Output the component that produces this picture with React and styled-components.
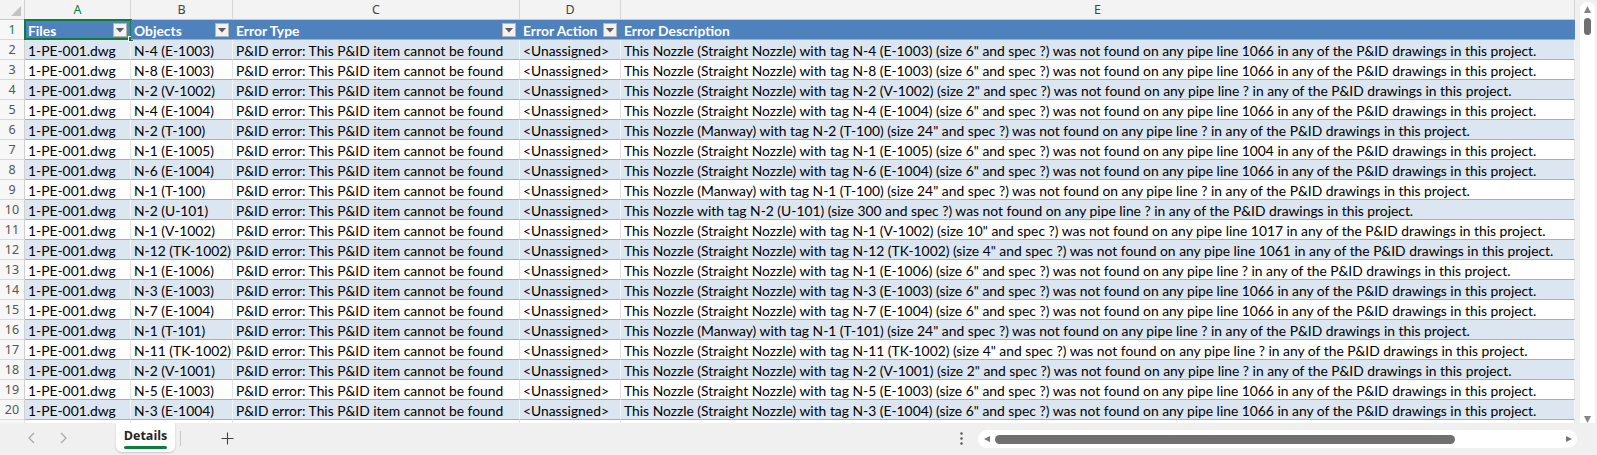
import React from "react";
import styled, { createGlobalStyle } from "styled-components";

const GlobalStyle = createGlobalStyle`
  html, body { margin: 0; padding: 0; background: #f0f0f0; }
  body { font-family: Lato, "Liberation Sans", sans-serif; }
  * { box-sizing: border-box; }
`;

const COLS = [25, 106, 102, 287, 101, 954];
const LETTERS = ["A", "B", "C", "D", "E"];
const HEADERS = ["Files", "Objects", "Error Type", "Error Action", "Error Description"];
const FILTERS = [true, true, true, true, false];

const S = (tag, size, line) =>
  `This Nozzle (Straight Nozzle) with tag ${tag} (size ${size}" and spec ?) was not found on any pipe line ${line} in any of the P&ID drawings in this project.`;
const M = (tag, size, line) =>
  `This Nozzle (Manway) with tag ${tag} (size ${size}" and spec ?) was not found on any pipe line ${line} in any of the P&ID drawings in this project.`;

const ROWS = [
  ["N-4 (E-1003)", S("N-4 (E-1003)", 6, 1066)],
  ["N-8 (E-1003)", S("N-8 (E-1003)", 6, 1066)],
  ["N-2 (V-1002)", S("N-2 (V-1002)", 2, "?")],
  ["N-4 (E-1004)", S("N-4 (E-1004)", 6, 1066)],
  ["N-2 (T-100)", M("N-2 (T-100)", 24, "?")],
  ["N-1 (E-1005)", S("N-1 (E-1005)", 6, 1004)],
  ["N-6 (E-1004)", S("N-6 (E-1004)", 6, 1066)],
  ["N-1 (T-100)", M("N-1 (T-100)", 24, "?")],
  [
    "N-2 (U-101)",
    "This Nozzle with tag N-2 (U-101) (size 300 and spec ?) was not found on any pipe line ? in any of the P&ID drawings in this project.",
  ],
  ["N-1 (V-1002)", S("N-1 (V-1002)", 10, 1017)],
  ["N-12 (TK-1002)", S("N-12 (TK-1002)", 4, 1061)],
  ["N-1 (E-1006)", S("N-1 (E-1006)", 6, "?")],
  ["N-3 (E-1003)", S("N-3 (E-1003)", 6, 1066)],
  ["N-7 (E-1004)", S("N-7 (E-1004)", 6, 1066)],
  ["N-1 (T-101)", M("N-1 (T-101)", 24, "?")],
  ["N-11 (TK-1002)", S("N-11 (TK-1002)", 4, "?")],
  ["N-2 (V-1001)", S("N-2 (V-1001)", 2, "?")],
  ["N-5 (E-1003)", S("N-5 (E-1003)", 6, 1066)],
  ["N-3 (E-1004)", S("N-3 (E-1004)", 6, 1066)],
];

const GREEN = "#107c41";

const Window = styled.div`
  width: 1597px;
  height: 455px;
  display: flex;
  flex-direction: column;
  background: #f0f0f0;
  overflow: hidden;
`;

const Main = styled.div`
  display: flex;
  height: 423px;
`;

const Sheet = styled.div`
  display: grid;
  grid-template-columns: ${COLS.map((c) => c + "px").join(" ")};
  grid-auto-rows: 20px;
  width: 1575px;
  height: 423px;
  overflow: hidden;
  background: #ffffff;
  font-size: 13.85px;
  color: #000;
`;

const Corner = styled.div`
  background: #f3f3f3;
  border-right: 1px solid #d0d0d0;
  border-bottom: 1px solid #c8c8c8;
  display: flex;
  align-items: flex-end;
  justify-content: flex-end;
  padding: 0 3px 3px 0;
`;

const ColHead = styled.div`
  background: #f3f3f3;
  border-right: 1px solid #d6d6d6;
  border-bottom: 1px solid #c8c8c8;
  display: flex;
  align-items: center;
  justify-content: center;
  font-family: "Noto Sans", "Open Sans", sans-serif;
  font-size: 12.5px;
  color: ${(p) => (p.$active ? GREEN : "#444")};
`;

const RowHead = styled.div`
  background: #f7f7f7;
  border-right: 1px solid #d0d0d0;
  border-bottom: 1px solid #dadada;
  display: flex;
  align-items: center;
  justify-content: center;
  font-family: "Noto Sans", "Open Sans", sans-serif;
  font-size: 12.5px;
  color: ${(p) => (p.$active ? GREEN : "#555")};
`;

const HeadCell = styled.div`
  position: relative;
  background: #4f81bd;
  border-bottom: 1px solid #95b3d7;
  color: #ffffff;
  font-weight: 700;
  display: flex;
  align-items: center;
  padding: 1px 3px 0 3px;
  white-space: nowrap;
`;

const Cell = styled.div`
  background: ${(p) => (p.$band ? "#dce6f1" : "#ffffff")};
  border-bottom: 1px solid #95b3d7;
  border-right: 1px solid ${(p) => (p.$band ? "#f2f6fa" : "#e2e2e2")};
  display: flex;
  align-items: center;
  padding: 1px 3px 0 3px;
  white-space: nowrap;
  overflow: hidden;
`;

const BlankCell = styled.div`
  border-right: 1px solid #e2e2e2;
  background: ${(p) => (p.$head ? "#f7f7f7" : "#ffffff")};
`;

const HeadLabel = styled.span`
  flex: 1;
`;

const FilterButton = styled.span`
  width: 14px;
  height: 14px;
  margin-right: 1px;
  background: #f2f2f2;
  border: 1px solid #b4b4b4;
  display: flex;
  align-items: center;
  justify-content: center;
`;

const Selection = styled.div`
  position: absolute;
  left: -1px;
  top: -1px;
  right: -1px;
  bottom: -1px;
  border: 2px solid ${GREEN};
  pointer-events: none;
`;

const Handle = styled.div`
  position: absolute;
  right: -4px;
  bottom: -4px;
  width: 6px;
  height: 6px;
  background: ${GREEN};
  border: 1px solid #ffffff;
`;

const VScroll = styled.div`
  width: 22px;
  padding: 2px 2px 0 5px;
`;

const VTrack = styled.div`
  height: 100%;
  background: #ffffff;
  border-radius: 8px 8px 0 0;
  display: flex;
  flex-direction: column;
  align-items: center;
  padding-top: 4px;
`;

const VThumb = styled.div`
  width: 7px;
  height: 17px;
  margin-top: 5px;
  border-radius: 4px;
  background: #707070;
`;

const VSpacer = styled.div`
  flex: 1;
`;

const BottomBar = styled.div`
  height: 32px;
  display: flex;
  align-items: flex-start;
  padding-left: 22px;
`;

const NavButton = styled.div`
  width: 20px;
  height: 30px;
  display: flex;
  align-items: center;
  justify-content: center;
  margin-right: 11px;
`;

const SheetTab = styled.div`
  margin-left: 32px;
  width: 59px;
  height: 29px;
  background: #ffffff;
  border-radius: 0 0 6px 6px;
  box-shadow: 0 1px 2px rgba(0, 0, 0, 0.18);
  display: flex;
  flex-direction: column;
  align-items: center;
  padding-top: 4px;
  font-family: "Open Sans", "Noto Sans", sans-serif;
  font-weight: 700;
  font-size: 12.5px;
  color: #242424;
`;

const TabUnderline = styled.div`
  width: 43px;
  height: 3px;
  margin-top: 2px;
  border-radius: 2px;
  background: ${GREEN};
`;

const Divider = styled.div`
  width: 1px;
  height: 15px;
  margin: 8px 0 0 5px;
  background: #c8c8c8;
`;

const AddButton = styled.div`
  margin-left: 34px;
  width: 24px;
  height: 30px;
  display: flex;
  align-items: center;
  justify-content: center;
`;

const Spacer = styled.div`
  flex: 1;
`;

const MoreDots = styled.div`
  width: 10px;
  height: 30px;
  margin-right: 12px;
  display: flex;
  align-items: center;
  justify-content: center;
`;

const HScroll = styled.div`
  width: 599px;
  height: 18px;
  margin: 7px 20px 0 0;
  background: #ffffff;
  border-radius: 9px;
  display: flex;
  align-items: center;
  padding: 0 5px 0 6px;
`;

const HThumb = styled.div`
  width: 460px;
  height: 9px;
  margin-left: 5px;
  border-radius: 5px;
  background: #707070;
`;

const Tri = ({ dir, size = 5, color = "#777" }) => {
  const pts = {
    up: `0,${size} ${size},${size} ${size / 2},0`,
    down: `0,0 ${size},0 ${size / 2},${size}`,
    left: `${size},0 ${size},${size} 0,${size / 2}`,
    right: `0,0 0,${size} ${size},${size / 2}`,
  }[dir];
  return (
    <svg width={size} height={size} viewBox={`0 0 ${size} ${size}`}>
      <polygon points={pts} fill={color} />
    </svg>
  );
};

const Chevron = ({ dir }) => (
  <svg width="8" height="12" viewBox="0 0 8 12">
    <polyline
      points={dir === "left" ? "6,1 1,6 6,11" : "2,1 7,6 2,11"}
      fill="none"
      stroke="#a8a8a8"
      strokeWidth="1.2"
    />
  </svg>
);

export default function App() {
  return (
    <Window>
      <GlobalStyle />
      <Main>
        <Sheet>
          <Corner>
            <svg width="10" height="10" viewBox="0 0 10 10">
              <polygon points="10,0 10,10 0,10" fill="#c3c3c3" />
            </svg>
          </Corner>
          {LETTERS.map((l, i) => (
            <ColHead key={l} $active={i === 0}>
              {l}
            </ColHead>
          ))}

          <RowHead $active>1</RowHead>
          {HEADERS.map((h, i) => (
            <HeadCell key={h}>
              <HeadLabel>{h}</HeadLabel>
              {FILTERS[i] && (
                <FilterButton>
                  <svg width="8" height="5" viewBox="0 0 8 5">
                    <polygon points="0,0 8,0 4,4.5" fill="#5a5a5a" />
                  </svg>
                </FilterButton>
              )}
              {i === 0 && (
                <Selection>
                  <Handle />
                </Selection>
              )}
            </HeadCell>
          ))}

          {ROWS.map(([obj, desc], r) => {
            const band = r % 2 === 0;
            return (
              <React.Fragment key={r}>
                <RowHead>{r + 2}</RowHead>
                <Cell $band={band}>1-PE-001.dwg</Cell>
                <Cell $band={band}>{obj}</Cell>
                <Cell $band={band}>P&amp;ID error: This P&amp;ID item cannot be found</Cell>
                <Cell $band={band}>&lt;Unassigned&gt;</Cell>
                <Cell $band={band}>{desc}</Cell>
              </React.Fragment>
            );
          })}
          <BlankCell $head />
          <BlankCell />
          <BlankCell />
          <BlankCell />
          <BlankCell />
          <BlankCell />
        </Sheet>
        <VScroll>
          <VTrack>
            <Tri dir="up" size={7} color="#858585" />
            <VThumb />
            <VSpacer />
            <Tri dir="down" size={7} color="#858585" />
          </VTrack>
        </VScroll>
      </Main>
      <BottomBar>
        <NavButton>
          <Chevron dir="left" />
        </NavButton>
        <NavButton>
          <Chevron dir="right" />
        </NavButton>
        <SheetTab>
          Details
          <TabUnderline />
        </SheetTab>
        <Divider />
        <AddButton>
          <svg width="13" height="13" viewBox="0 0 13 13">
            <path d="M6.5 0.5 V12.5 M0.5 6.5 H12.5" stroke="#444" strokeWidth="1.1" />
          </svg>
        </AddButton>
        <Spacer />
        <MoreDots>
          <svg width="3" height="13" viewBox="0 0 3 13">
            <circle cx="1.5" cy="1.5" r="1.2" fill="#555" />
            <circle cx="1.5" cy="6.5" r="1.2" fill="#555" />
            <circle cx="1.5" cy="11.5" r="1.2" fill="#555" />
          </svg>
        </MoreDots>
        <HScroll>
          <Tri dir="left" size={6} color="#777" />
          <HThumb />
          <Spacer />
          <Tri dir="right" size={6} color="#777" />
        </HScroll>
      </BottomBar>
    </Window>
  );
}
